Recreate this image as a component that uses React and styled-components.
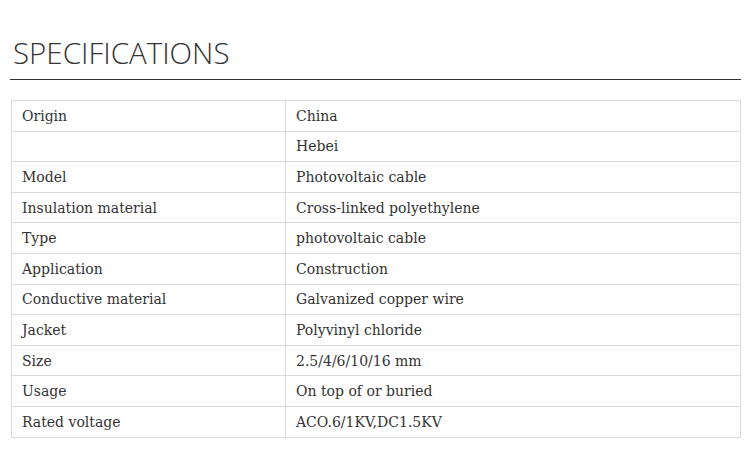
import React from 'react';
import styled, { createGlobalStyle } from 'styled-components';

const rows = [
  ['Origin', 'China'],
  ['', 'Hebei'],
  ['Model', 'Photovoltaic cable'],
  ['Insulation material', 'Cross-linked polyethylene'],
  ['Type', 'photovoltaic cable'],
  ['Application', 'Construction'],
  ['Conductive material', 'Galvanized copper wire'],
  ['Jacket', 'Polyvinyl chloride'],
  ['Size', '2.5/4/6/10/16 mm'],
  ['Usage', 'On top of or buried'],
  ['Rated voltage', 'ACO.6/1KV,DC1.5KV'],
];

const App = () => {
  return (
    <>
      <GlobalStyle />
      <Page>
        <Title>SPECIFICATIONS</Title>
        <SpecTable>
          <colgroup>
            <col style={{ width: 274 }} />
            <col />
          </colgroup>
          <tbody>
            {rows.map(([name, value], i) => (
              <Row key={i}>
                <Cell>{name}</Cell>
                <Cell>{value}</Cell>
              </Row>
            ))}
          </tbody>
        </SpecTable>
      </Page>
    </>
  );
};

const GlobalStyle = createGlobalStyle`
  body {
    margin: 0;
    background: #fff;
  }
`;

const Page = styled.div`
  width: 750px;
  padding: 35px 9px 0 10px;
  box-sizing: border-box;
`;

const Title = styled.h2`
  margin: 0 0 20px;
  padding: 0 0 9px 3px;
  border-bottom: 1px solid #333;
  font-family: 'Open Sans', sans-serif;
  font-weight: 300;
  font-size: 29.5px;
  line-height: 35px;
  color: #333;
`;

const SpecTable = styled.table`
  width: 730px;
  margin-left: 1px;
  border-collapse: collapse;
  table-layout: fixed;
`;

const Row = styled.tr`
  height: 30.6px;
`;

const Cell = styled.td`
  border: 1px solid #d9d9d9;
  padding: 0 10px;
  vertical-align: middle;
  font-family: 'DejaVu Serif', 'Liberation Serif', serif;
  font-size: 14px;
  color: #333;
`;

export default App;
